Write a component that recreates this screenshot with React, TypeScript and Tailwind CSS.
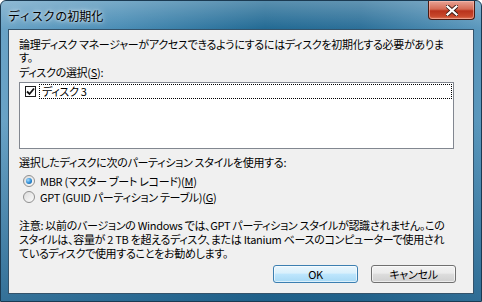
import React from "react";

const ui = "[font-family:'Noto_Sans_CJK_JP','Liberation_Sans',sans-serif] [font-feature-settings:'palt']";

function Radio({ checked }: { checked?: boolean }) {
    return (
        <span className="relative flex h-[12px] w-[12px] items-center justify-center rounded-full border border-[#8f8f8f] bg-gradient-to-br from-[#dcdcdc] to-[#fbfbfb]">
            {checked && (
                <span className="h-[6px] w-[6px] rounded-full bg-[radial-gradient(circle_at_35%_35%,_#a6dcff_0%,_#2a8ad4_55%,_#0d4f8c_100%)]" />
            )}
        </span>
    );
}

export default function App() {
    return (
        <div className={`relative flex h-[302px] w-[482px] flex-col overflow-hidden rounded-t-[6px] border border-[#1b3a52] bg-[linear-gradient(90deg,#6aa3c6_0%,#4a8db5_25%,#226a94_55%,#2c7099_75%,#5b98bd_100%)] ${ui}`}>
            {/* glossy strip */}
            <div className="pointer-events-none absolute inset-x-0 top-0 h-[28px] bg-gradient-to-b from-white/25 to-white/0" />
            <div className="pointer-events-none absolute inset-x-0 bottom-0 top-[120px] bg-gradient-to-b from-[#2a6b95]/0 to-[#1d5b84]/70" />

            {/* Title bar */}
            <div className="relative flex h-[28px] shrink-0 items-start">
                <span className="ml-[7px] mt-[7px] text-[12px] leading-[16px] text-black [font-feature-settings:normal] [text-shadow:0_0_6px_rgba(255,255,255,0.9),0_0_3px_rgba(255,255,255,0.7)]">
                    ディスクの初期化
                </span>
                <div className="ml-auto mr-[6px] flex h-[19px] w-[47px] items-center justify-center rounded-b-[4px] border border-t-0 border-[#4a1a12] bg-[linear-gradient(180deg,#e8a395_0%,#d56b55_45%,#b9331c_55%,#c8482c_85%,#e07a5a_100%)] shadow-[inset_0_0_0_1px_rgba(255,200,190,0.5)]">
                    <svg width="12" height="11" viewBox="0 0 12 11">
                        <path d="M1.5 1.5 L10.5 9.5 M10.5 1.5 L1.5 9.5" stroke="#3a1a14" strokeWidth="4" strokeLinecap="square" />
                        <path d="M1.5 1.5 L10.5 9.5 M10.5 1.5 L1.5 9.5" stroke="#ffffff" strokeWidth="2.2" strokeLinecap="square" />
                    </svg>
                </div>
            </div>

            {/* Client area */}
            <div className="relative mx-[7px] mb-[7px] flex flex-1 flex-col border border-[#34536b] bg-[#f0f0f0] px-[10px] text-[11px] tracking-[-0.3px] text-black">
                <p className="mt-[8px] whitespace-nowrap leading-[13px]">
                    論理ディスク マネージャーがアクセスできるようにするにはディスクを初期化する必要がありま
                    <br />
                    す。
                </p>
                <p className="mt-[2px] leading-[13px]">
                    ディスクの選択(<span className="underline">S</span>):
                </p>
                <div className="mt-[3px] h-[67px] w-[435px] border border-[#828790] bg-white px-[1px] pt-[1px]">
                    <div className="flex h-[15px] items-center">
                        <span className="ml-[4px] flex h-[11px] w-[11px] items-center justify-center border border-[#1c1c1c] bg-white">
                            <svg width="9" height="9" viewBox="0 0 9 9">
                                <path d="M1 4.5 L3.5 7 L8 1.5" stroke="#111" strokeWidth="1.8" fill="none" />
                            </svg>
                        </span>
                        <div className="ml-[3px] flex h-[15px] flex-1 items-center border border-dotted border-black pl-[2px] leading-[13px]">
                            ディスク 3
                        </div>
                    </div>
                </div>
                <p className="mt-[7px] whitespace-nowrap leading-[13px]">
                    選択したディスクに次のパーティション スタイルを使用する:
                </p>
                <div className="mt-[4px] flex h-[16px] items-center gap-[5px] pl-[4px]">
                    <Radio checked />
                    <span className="leading-[13px]">
                        MBR (マスター ブート レコード)(<span className="underline">M</span>)
                    </span>
                </div>
                <div className="flex h-[16px] items-center gap-[5px] pl-[4px]">
                    <Radio />
                    <span className="leading-[13px]">
                        GPT (GUID パーティション テーブル)(<span className="underline">G</span>)
                    </span>
                </div>
                <p className="mt-[13px] whitespace-nowrap leading-[14px]">
                    注意: 以前のバージョンの Windows では、GPT パーティション スタイルが認識されません。この
                    <br />
                    スタイルは、容量が 2 TB を超えるディスク、または Itanium ベースのコンピューターで使用され
                    <br />
                    ているディスクで使用することをお勧めします。
                </p>
                <div className="mt-[5px] flex justify-end gap-[13px] pr-[7px]">
                    <button className="flex h-[18px] w-[85px] items-center justify-center rounded-[3px] border border-[#3c7fb1] bg-[linear-gradient(180deg,#eaf6fd_0%,#d9f0fc_45%,#bee6fd_50%,#a7d9f5_100%)] text-[11px] leading-[13px] shadow-[inset_0_0_0_1px_rgba(255,255,255,0.6)]">
                        OK
                    </button>
                    <button className="flex h-[18px] w-[85px] items-center justify-center rounded-[3px] border border-[#707070] bg-[linear-gradient(180deg,#f2f2f2_0%,#ebebeb_45%,#dddddd_50%,#cfcfcf_100%)] text-[11px] leading-[13px] shadow-[inset_0_0_0_1px_rgba(255,255,255,0.6)]">
                        キャンセル
                    </button>
                </div>
            </div>
        </div>
    );
}
